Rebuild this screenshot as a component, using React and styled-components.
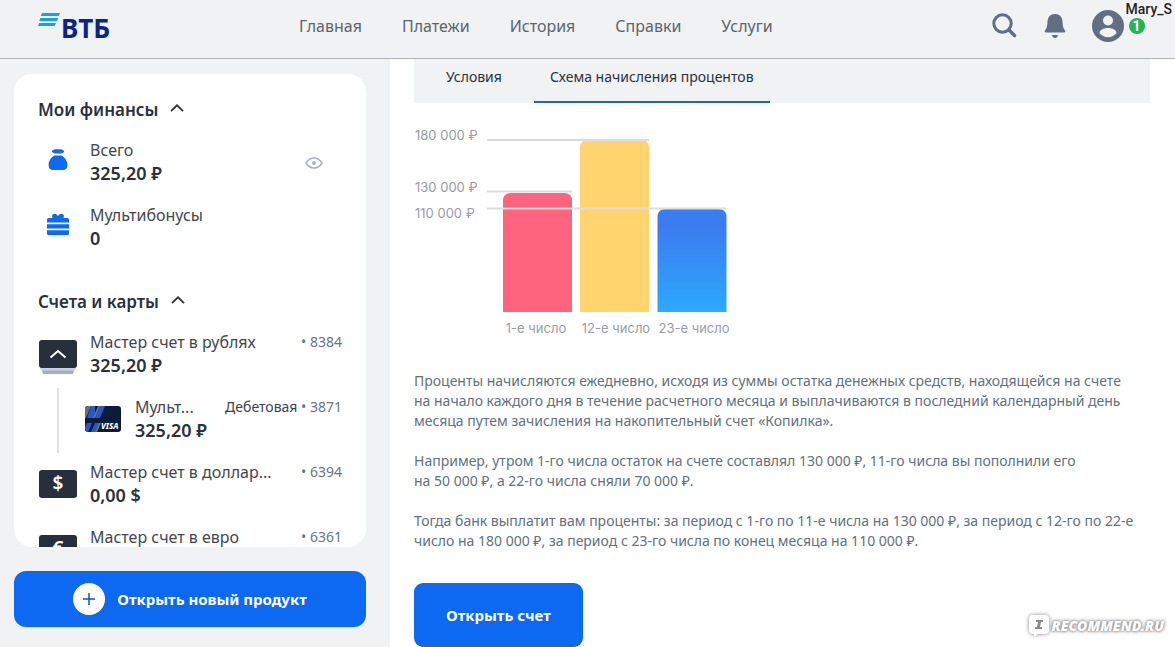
import React from 'react'
import styled, { createGlobalStyle } from 'styled-components'

const GlobalStyle = createGlobalStyle`
  * {
    box-sizing: border-box;
  }

  body {
    margin: 0;
    background: #fff;
    color: #2b313b;
    font-family: 'Noto Sans', 'Open Sans', sans-serif;
  }

  button {
    font-family: inherit;
    border: 0;
    padding: 0;
    background: none;
    cursor: pointer;
  }
`

const Page = styled.div`
  display: flex;
  flex-direction: column;
  height: 100vh;
  overflow: hidden;
`

const Header = styled.header`
  display: flex;
  align-items: center;
  flex: none;
  height: 59px;
  padding: 0 51px 6px 38px;
  background: #f1f2f4;
  border-bottom: 1px solid #adb4bc;
`

const Logo = styled.a`
  flex: none;
  width: 261px;
  height: 40px;
`

const Nav = styled.nav`
  display: flex;
  flex: 1;
  gap: 40px;
`

const NavLink = styled.a`
  color: #5f646b;
  font-size: 16px;
  line-height: 20px;
  text-decoration: none;
`

const Tools = styled.div`
  display: flex;
  align-items: center;
  gap: 26px;
`

const IconButton = styled.button`
  display: flex;
  align-items: center;
  justify-content: center;
  color: #626e84;
`

const UserTag = styled.div`
  position: absolute;
  top: 1px;
  right: 3px;
  color: #222;
  font: 500 14px/17px Roboto, sans-serif;
  text-shadow: 0 0 4px #fff;
`

const Badge = styled.span`
  display: block;
  width: 16px;
  height: 16px;
  margin-left: 3px;
  border-radius: 50%;
  background: #21b553;
  color: #fff;
  font-size: 14px;
  font-weight: 700;
  line-height: 16px;
  text-align: center;
  text-shadow: none;
`

const Body = styled.div`
  display: flex;
  flex: 1;
  min-height: 0;
`

const Sidebar = styled.aside`
  display: flex;
  flex-direction: column;
  flex: none;
  gap: 24px;
  width: 390px;
  padding: 15px 24px 20px 14px;
  background: #f1f2f4;
`

const Card = styled.div`
  flex: 1;
  min-height: 0;
  overflow: hidden;
  padding: 24px;
  border-radius: 18px;
  background: #fff;
`

const Section = styled.section`
  margin-bottom: 29px;
`

const SectionTitle = styled.button`
  display: flex;
  align-items: center;
  gap: 12px;
  margin-bottom: 9px;
  color: #2b313b;
  font-size: 17px;
  font-weight: 600;
  line-height: 24px;

  svg {
    margin-bottom: 4px;
  }
`

const Row = styled.div`
  display: flex;
  align-items: flex-start;
  gap: ${(props) => props.$nested ? '14px' : '12px'};
  margin-left: ${(props) => props.$nested ? '19px' : '0'};
  padding: ${(props) => props.$nested ? '9px 0 10px 26px' : '9px 0 10px'};
  border-left: ${(props) => props.$nested ? '2px solid #dddfe2' : '0'};
`

const RowIcon = styled.div`
  display: flex;
  justify-content: center;
  flex: none;
  width: ${(props) => props.$nested ? '36px' : '40px'};
  padding-top: 8px;
`

const RowText = styled.div`
  flex: 1;
  min-width: 0;
  white-space: nowrap;
`

const Name = styled.div`
  color: #42474f;
  font-size: 16px;
  line-height: 20px;
`

const Amount = styled.div`
  font-size: 18px;
  font-weight: 600;
  line-height: 26px;
`

const Meta = styled.div`
  flex: none;
  color: #3d434c;
  font-size: 14px;
  line-height: 20px;

  span {
    color: #6a7484;
  }
`

const EyeButton = styled(IconButton)`
  align-self: center;
  width: 56px;
`

const NewProduct = styled.button`
  display: flex;
  align-items: center;
  justify-content: center;
  flex: none;
  gap: 12px;
  height: 56px;
  border-radius: 12px;
  background: #0d69f2;
  color: #fff;
  font-size: 15px;
  font-weight: 700;
`

const Main = styled.main`
  flex: 1;
  min-width: 0;
  overflow: hidden;
  padding: 0 25px 0 24px;
`

const Tabs = styled.div`
  display: flex;
  height: 44px;
  background: #f1f2f4;
`

const Tab = styled.button`
  height: 44px;
  padding: 0 ${(props) => props.$active ? '16px' : '32px'} 8px;
  border-bottom: 2px solid ${(props) => props.$active ? '#2469a5' : 'transparent'};
  color: #2b313b;
  font-size: 14px;
`

const Chart = styled.svg`
  display: block;
  margin: 16px 0 24px;

  text {
    fill: #9a9da3;
    font: 13px Inter, sans-serif;
  }
`

const Text = styled.p`
  margin: 0 0 20px;
  color: #64707c;
  font-size: 14px;
  line-height: 20px;
  white-space: nowrap;
`

const OpenButton = styled.button`
  height: 64px;
  margin-top: 12px;
  padding: 0 32px;
  border-radius: 9px;
  background: #0d69f2;
  color: #fff;
  font-size: 15px;
  font-weight: 700;
`

const Watermark = styled.div`
  position: absolute;
  right: 11px;
  bottom: 7px;
  display: flex;
  align-items: center;
  gap: 2px;
  color: #fff;
  font: italic 900 14px/28px 'Noto Sans', sans-serif;
  text-shadow: 0 0 2px #888, 0 0 3px #999, 0 0 5px #aaa;

  svg {
    filter: drop-shadow(0 0 2px #888);
  }
`

const ChevronUp = () => (
  <svg width="14" height="8" viewBox="0 0 14 8" fill="none" stroke="#2b313b" strokeWidth="1.7">
    <path d="M1 7.2 7 1.3l6 5.9" />
  </svg>
)

const BagIcon = () => (
  <svg width="20" height="23" viewBox="0 -1 20 23" fill="#0d69f2">
    <path d="M5.200.9C6.500.3 8 .200 10 .200s3.500.1 4.800.7c1.200.5 1.700 1.200 1 2.100-.7.9-1.700 1.400-3 1.400H7.200c-1.300 0-2.300-.5-3-1.400-.7-.9-.2-1.600 1-2.100z" />
    <path d="M6.400 6.600h7.200c3.400 2 5.800 5.700 5.800 9.100 0 3.300-1.600 5.300-4.300 5.300H4.900C2.200 21 .6 19 .6 15.700c0-3.400 2.400-7.100 5.800-9.100z" />
  </svg>
)

const GiftIcon = () => (
  <svg width="22" height="23" viewBox="0 0 22 23" fill="#0d69f2">
    <path d="M0 9.500V7c0-1.200.7-1.900 1.900-1.900h3.700C4.600 3.200 5 .9 7.300.7 9 .5 10.300 1.800 11 3.300 11.700 1.800 13 .5 14.700.7c2.300.2 2.700 2.500 1.700 4.400h3.700c1.200 0 1.900.7 1.900 1.900v2.500z" />
    <path d="M0 11.200h22v4.300H0zM0 17.300h22v2.900c0 1.200-.7 1.900-1.900 1.900H1.900C.7 22.100 0 21.400 0 20.200z" />
  </svg>
)

const EyeIcon = () => (
  <svg width="18" height="12" viewBox="0 0 18 12" fill="none" stroke="#a9b2bd" strokeWidth="1.600">
    <path d="M1 6c2-3.300 4.700-5 8-5s6 1.700 8 5c-2 3.300-4.700 5-8 5S3 9.300 1 6z" />
    <circle cx="9" cy="6" r="2" fill="#a9b2bd" stroke="none" />
  </svg>
)

const MasterIcon = () => (
  <svg width="38" height="36" viewBox="0 0 38 36">
    <path d="M2 25h34l-1.500 7.500c-.2 1-.8 1.500-1.800 1.500H5.300c-1 0-1.600-.5-1.800-1.500z" fill="#a3aec2" />
    <path d="M0 25h38l-2 5.500H2z" fill="#c9d1df" />
    <rect width="38" height="28" rx="3" fill="#262f3b" />
    <path d="m11.500 17.500 7.500-6.500 7.500 6.500" fill="none" stroke="#fff" strokeWidth="2" />
  </svg>
)

const CurrencyIcon = styled.div`
  width: 38px;
  height: 28px;
  border-radius: 3px;
  background: #262f3b;
  color: #fff;
  font-size: 19px;
  font-weight: 600;
  line-height: 27px;
  text-align: center;
`

const VisaIcon = () => (
  <svg width="36" height="27" viewBox="0 0 36 27">
    <defs>
      <clipPath id="visa">
        <rect width="36" height="26" y="1" rx="3" />
      </clipPath>
    </defs>
    <g clipPath="url(#visa)">
      <rect width="36" height="27" fill="#0b1c38" />
      <path d="M0 1h6L1 13H0z" fill="#6b7078" />
      <path d="M6 1h4v12H2zM15 1h5l-5 12h-5z" fill="#2858c8" />
      <path d="M13 1h2l-5 12H8z" fill="#6b7078" />
      <path d="M2 18h5L3 27H0v-5zM10 18h5l-4 9H6z" fill="#2858c8" />
      <path d="M14 18h2l-4 9h-2z" fill="#6b7078" />
    </g>
    <text x="16" y="24" fill="#fff" fontFamily="Noto Sans, sans-serif" fontSize="8" fontWeight="800" fontStyle="italic">VISA</text>
  </svg>
)

const PlusIcon = () => (
  <svg width="32" height="32" viewBox="0 0 32 32">
    <circle cx="16" cy="16" r="16" fill="#fff" />
    <path d="M16 10v12M10 16h12" stroke="#0d50c8" strokeWidth="1.500" />
  </svg>
)

const navItems = ['Главная', 'Платежи', 'История', 'Справки', 'Услуги']

const accounts = [
  { name: 'Мастер счет в рублях', amount: '325,20 ₽', number: '8384', icon: <MasterIcon /> },
  { name: 'Мульт...', amount: '325,20 ₽', number: '3871', kind: 'Дебетовая', nested: true, icon: <VisaIcon /> },
  { name: 'Мастер счет в доллар...', amount: '0,00 $', number: '6394', icon: <CurrencyIcon>$</CurrencyIcon> },
  { name: 'Мастер счет в евро', amount: '0,00 €', number: '6361', icon: <CurrencyIcon>€</CurrencyIcon> },
]

const TopBar = () => (
  <Header>
    <Logo href="#" aria-label="ВТБ">
      <svg width="84" height="40" viewBox="0 -4 84 40">
        <g fill="#14a3e6">
          <path d="M4 3h18l-1.200 3H2.800zM2.400 8h17.800L19 11H1.200zM1.200 13H18l-1.200 3H0z" />
        </g>
        <text x="23" y="28" fill="#0c2486" fontFamily="Noto Sans, sans-serif" fontSize="26" fontWeight="700">ВТБ</text>
      </svg>
    </Logo>
    <Nav>
      {navItems.map((item) => <NavLink href="#" key={item}>{item}</NavLink>)}
    </Nav>
    <Tools>
      <IconButton aria-label="Поиск">
        <svg width="26" height="26" viewBox="1 1 26 26" fill="none" stroke="currentColor">
          <circle cx="11.500" cy="11.500" r="8.700" strokeWidth="3" />
          <path d="m18 18 5.500 5.500" strokeWidth="3.600" strokeLinecap="round" />
        </svg>
      </IconButton>
      <IconButton aria-label="Уведомления">
        <svg width="22" height="26" viewBox="0 0 22 26" fill="currentColor">
          <path d="M11 1c-4.600 0-7.200 3-7.500 7.500-.2 4-.6 6.800-2.200 8.500-1.200 1.300-.7 2.500.7 2.500h18c1.400 0 1.900-1.200.7-2.500-1.600-1.700-2-4.500-2.200-8.500C18.200 4 15.600 1 11 1z" />
          <path d="M8 22h6c-.3 1.800-1.400 3-3 3s-2.700-1.200-3-3z" />
        </svg>
      </IconButton>
      <IconButton aria-label="Профиль">
        <svg width="32" height="32" viewBox="0 0 32 32">
          <circle cx="16" cy="16" r="16" fill="currentColor" />
          <circle cx="16" cy="10.500" r="5" fill="#f1f2f4" />
          <path d="M16 18c4.800 0 8.500 2.300 8.500 5-1.800 2.600-5 4.200-8.500 4.200S9.300 25.600 7.500 23c0-2.700 3.700-5 8.500-5z" fill="#f1f2f4" />
        </svg>
      </IconButton>
    </Tools>
  </Header>
)

const Finances = () => (
  <Section>
    <SectionTitle>Мои финансы <ChevronUp /></SectionTitle>
    <Row>
      <RowIcon><BagIcon /></RowIcon>
      <RowText>
        <Name>Всего</Name>
        <Amount>325,20 ₽</Amount>
      </RowText>
      <EyeButton aria-label="Скрыть сумму"><EyeIcon /></EyeButton>
    </Row>
    <Row>
      <RowIcon><GiftIcon /></RowIcon>
      <RowText>
        <Name>Мультибонусы</Name>
        <Amount>0</Amount>
      </RowText>
    </Row>
  </Section>
)

const Accounts = () => (
  <Section>
    <SectionTitle>Счета и карты <ChevronUp /></SectionTitle>
    {accounts.map((account) => (
      <Row $nested={account.nested} key={account.number}>
        <RowIcon $nested={account.nested}>{account.icon}</RowIcon>
        <RowText>
          <Name>{account.name}</Name>
          <Amount>{account.amount}</Amount>
        </RowText>
        <Meta>{account.kind} <span>• {account.number}</span></Meta>
      </Row>
    ))}
  </Section>
)

const InterestChart = () => (
  <Chart width="320" height="228" viewBox="0 0 320 228">
    <defs>
      <linearGradient id="blueBar" x1="0" y1="0" x2="0" y2="1">
        <stop offset="0.200" stopColor="#3b7df0" />
        <stop offset="1" stopColor="#2da9fc" />
      </linearGradient>
    </defs>
    <path d="M89 193V82q0-8 8-8h53q8 0 8 8v111z" fill="#ff647f" />
    <path d="M166 193V29q0-8 8-8h53q8 0 8 8v164z" fill="#ffd36e" />
    <path d="M243.500 193V98q0-8 8-8h53q8 0 8 8v95z" fill="url(#blueBar)" />
    <path d="M73 21h162M73 72.500h85M73 89.500h239" stroke="#dcdde0" strokeWidth="2" />
    <text x="1" y="21">180 000 ₽</text>
    <text x="1" y="73">130 000 ₽</text>
    <text x="1" y="99">110 000 ₽</text>
    <text x="122" y="214" textAnchor="middle">1-е число</text>
    <text x="202" y="214" textAnchor="middle">12-е число</text>
    <text x="280" y="214" textAnchor="middle">23-е число</text>
  </Chart>
)

const App = () => (
  <Page>
    <GlobalStyle />
    <TopBar />
    <Body>
      <Sidebar>
        <Card>
          <Finances />
          <Accounts />
        </Card>
        <NewProduct><PlusIcon /> Открыть новый продукт</NewProduct>
      </Sidebar>
      <Main>
        <Tabs>
          <Tab>Условия</Tab>
          <Tab $active>Схема начисления процентов</Tab>
        </Tabs>
        <InterestChart />
        <Text>
          Проценты начисляются ежедневно, исходя из суммы остатка денежных средств, находящейся на счете<br />
          на начало каждого дня в течение расчетного месяца и выплачиваются в последний календарный день<br />
          месяца путем зачисления на накопительный счет «Копилка».
        </Text>
        <Text>
          Например, утром 1-го числа остаток на счете составлял 130 000 ₽, 11-го числа вы пополнили его<br />
          на 50 000 ₽, а 22-го числа сняли 70 000 ₽.
        </Text>
        <Text>
          Тогда банк выплатит вам проценты: за период с 1-го по 11-е числа на 130 000 ₽, за период с 12-го по 22-е<br />
          число на 180 000 ₽, за период с 23-го числа по конец месяца на 110 000 ₽.
        </Text>
        <OpenButton>Открыть счет</OpenButton>
      </Main>
    </Body>
    <UserTag>
      Mary_S
      <Badge>1</Badge>
    </UserTag>
    <Watermark>
      <svg width="22" height="26" viewBox="0 0 22 26">
        <path d="M5 2h12q4 0 4 4v11q0 4-4 4h-7l-4 3v-3H5q-4 0-4-4V6q0-4 4-4z" fill="#fff" />
        <path d="M8 7h7v2h-2l-1 5h2v2H7v-2h2l1-5H8z" fill="#8a8a8a" />
      </svg>
      RECOMMEND.RU
    </Watermark>
  </Page>
)

export default App
